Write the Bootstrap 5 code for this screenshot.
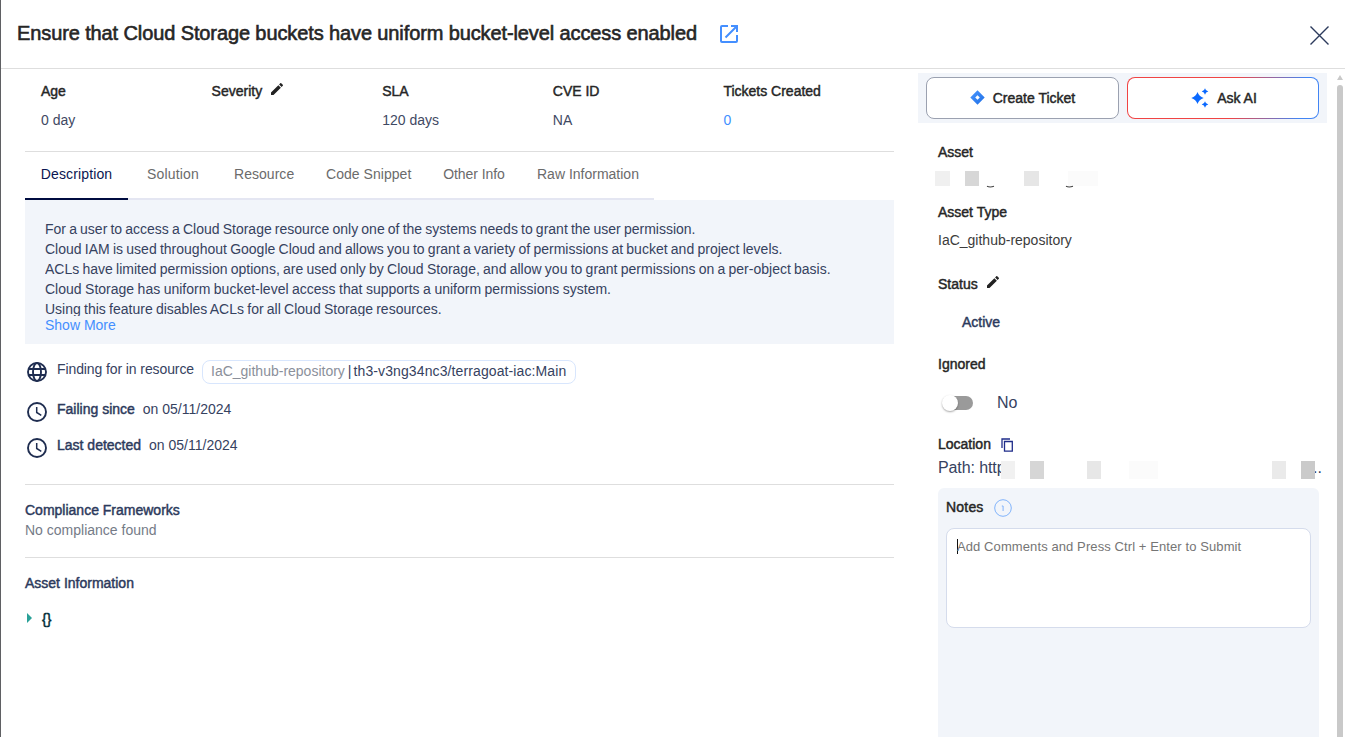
<!DOCTYPE html>
<html lang="en">
<head>
<meta charset="utf-8">
<meta name="viewport" content="width=device-width, initial-scale=1">
<title>Finding details</title>
<link href="https://cdn.jsdelivr.net/npm/bootstrap@5.3.0/dist/css/bootstrap.min.css" rel="stylesheet">
<style>
  body { font-family: "Liberation Sans", Arial, sans-serif; font-size: 14px; line-height: 20px; color: #36425f; height: 737px; overflow: hidden; border-left: 1px solid #5f6063; background: #fff; }
  .strong-text { color: #262626; -webkit-text-stroke: .45px currentColor; }
  .strong-text.navy { color: #2c3a5c; }
  .stat .val.blue, .blue { color: #448fff; }
  .top-bar { height: 69px; border-bottom: 1px solid #dedede; padding: 0 16px 0 16px; }
  .page-title { font-size: 20px; line-height: 26px; margin: 0 23px 2px 0; letter-spacing: -.111px; -webkit-text-stroke: .6px currentColor; font-weight: 400; }
  .close-icon { margin-top: 3px; }
  .main-col { width: 869px; margin-left: 24px; }
  .side-col { width: 409px; margin-left: 24px; padding-top: 4px; }
  .stats { height: 83px; padding: 12px 0 0 16px; border-bottom: 1px solid #dedede; }
  .stat { width: 170.6px; line-height: 20px; }
  .stat .val { margin-top: 9px; color: #3f4963; }
  .pencil { margin: 2px 0 0 9px; }
  .tabs { height: 48px; width: 629px; border-bottom: 2px solid #e4e6f2; flex-wrap: nowrap; }
  .tabs .nav-link { padding: 12px 16px; color: #6b6b6b; height: 48px; line-height: 20px; text-align: center; white-space: nowrap; letter-spacing: .04px; }
  .tabs .nav-link.active { color: #0a1551; border-bottom: 2px solid #000c40; width: 103px; padding-left: 15px; padding-right: 15px; letter-spacing: .13px; }
  .w-sol { width: 90px; letter-spacing: .17px !important; } .w-res { width: 92px; } .w-code { width: 117px; } .w-oth { width: 94px; letter-spacing: -.07px !important; } .w-raw { width: 133px; letter-spacing: 0 !important; }
  .desc-box { background: #f2f5fa; height: 144px; padding: 19px 20px 0; }
  .desc-text { height: 97px; overflow: hidden; white-space: nowrap; word-spacing: -.64px; }
  .desc-text div:nth-child(1) { word-spacing: -.74px; }
  .desc-text div:nth-child(4) { word-spacing: -.4px; }
  .more { line-height: 18px; }
  .fact { height: 36px; padding-left: 2px; }
  .fact svg { margin: 12px 10px 0 0; flex: none; }
  .fact span.lbl { margin-top: 9px; }
  .pill { border: 1px solid #d8e6fd; border-radius: 8px; height: 24px; line-height: 20px; padding: 0 8px; width: 374px; margin: 10px 0 0 8px; white-space: nowrap; }
  .pill .muted { color: #8b909b; }
  .pill .bar { margin: 0 2px 0 3px; }
  .pill .repo { letter-spacing: .11px; }
  .facts { height: 141px; border-bottom: 1px solid #dedede; padding-top: 6px; }
  .comp { height: 73px; padding-top: 15px; border-bottom: 1px solid #dedede; }
  .info { padding-top: 15px; }
  .grey { color: #757b87; }
  .json-mark { margin: 4px 0 0 2px; }
  .strong-text.json { margin-left: 10px; color: #002b36; }
  .act-bar { background: #f2f5fa; height: 50px; padding: 4px 8px; gap: 8px; }
  .act-bar .btn { width: 193px; height: 42px; border-radius: 8px; font-size: 14px; background: #fff; border: 1px solid #9ba1b0; padding: 0 0 1px; line-height: 20px; }
  .act-bar .ask { border: 0; padding: 1px; background: linear-gradient(100deg, #f04444 0, #f04444 55%, #4285f4 90%); width: 192px; }
  .ask-inner { background: #fff; border-radius: 7px; padding: 0 0 1px 2px; }
  .side-body { padding-left: 20px; }
  .side-body .redacted { margin: 8px 0 0 -3px; }
  .toggle-track { width: 29px; height: 14px; border-radius: 7px; background: #9a9a9a; margin: 0 24px 0 6px; }
  .toggle-knob { width: 16px; height: 16px; border-radius: 50%; background: #fff; box-shadow: 0 1px 2px rgba(0,0,0,.35); margin: -1px 0 0 -2px; }
  .toggle-row { margin-top: 19px; font-size: 16px; }
  .path-row { margin-top: 4px; font-size: 16px; height: 24px; width: 386px; line-height: 20px; }
  .path-row .path { width: 63px; letter-spacing: -.1px; }
  .path-row svg { margin-top: 3px; position: relative; }
  .path-row .dots { margin-left: -3px; }
  .notes { background: #f2f5fa; width: 381px; height: 260px; border-radius: 6px 6px 0 0; padding: 9px 8px 0; margin-top: 6px; }
  .comment-box { height: 100px; border: 1px solid #d5dcec; border-radius: 8px; font-size: 13px; line-height: 16px; color: #757575; padding: 10px; letter-spacing: .095px; margin-top: 11px; background: #fff; }
  .caret { width: 1px; height: 15px; background: #111; margin-right: -1px; }
  .scroll-col { width: 6px; margin-left: 10px; padding-top: 6px; }
  .thumb { width: 6px; height: 660px; background: #c9c9c9; border-radius: 3px 3px 0 0; margin-top: 4px; }
</style>
</head>
<body class="d-flex flex-column">
<header class="top-bar d-flex align-items-center flex-shrink-0">
  <h1 class="page-title strong-text text-nowrap">Ensure that Cloud Storage buckets have uniform bucket-level access enabled</h1>
  <svg width="18" height="18" viewBox="0 0 18 18" fill="none" stroke="#448fff" stroke-width="2"><path d="M8 1H2Q1 1 1 2v14q0 1 1 1h14q1 0 1-1v-6M11 1h6v6M17 1 5.500 12.500"/></svg>
  <svg class="ms-auto close-icon" width="19" height="19" viewBox="0 0 19 19" stroke="#2c3a5c" stroke-width="1.400"><path d="m.5.5 18 18M18.500.5l-18 18"/></svg>
</header>
<div class="d-flex flex-fill">
  <main class="main-col flex-shrink-0">
    <section class="stats d-flex">
      <div class="stat flex-shrink-0"><div class="strong-text">Age</div><div class="val">0 day</div></div>
      <div class="stat flex-shrink-0"><div class="strong-text d-flex">Severity
        <svg class="pencil" width="12" height="12" viewBox="3 3 18 18" fill="#222"><path d="M3 17.250V21h3.750L17.800 9.940l-3.750-3.750zM20.700 7a1 1 0 0 0 0-1.400l-2.340-2.340a1 1 0 0 0-1.400 0l-1.830 1.830 3.750 3.750z"/></svg></div></div>
      <div class="stat flex-shrink-0"><div class="strong-text">SLA</div><div class="val">120 days</div></div>
      <div class="stat flex-shrink-0"><div class="strong-text">CVE ID</div><div class="val">NA</div></div>
      <div class="stat flex-shrink-0"><div class="strong-text">Tickets Created</div><div class="val blue">0</div></div>
    </section>
    <nav class="nav tabs">
      <a class="nav-link active">Description</a><a class="nav-link w-sol">Solution</a><a class="nav-link w-res">Resource</a><a class="nav-link w-code">Code Snippet</a><a class="nav-link w-oth">Other Info</a><a class="nav-link w-raw">Raw Information</a>
    </nav>
    <section class="desc-box">
      <div class="desc-text">
        <div>For a user to access a Cloud Storage resource only one of the systems needs to grant the user permission.</div>
        <div>Cloud IAM is used throughout Google Cloud and allows you to grant a variety of permissions at bucket and project levels.</div>
        <div>ACLs have limited permission options, are used only by Cloud Storage, and allow you to grant permissions on a per-object basis.</div>
        <div>Cloud Storage has uniform bucket-level access that supports a uniform permissions system.</div>
        <div>Using this feature disables ACLs for all Cloud Storage resources.</div>
      </div>
      <div class="more blue">Show More</div>
    </section>
    <section class="facts">
      <div class="fact d-flex mb-1">
        <svg width="20" height="20" viewBox="0 0 20 20" fill="none" stroke="#1f2d50" stroke-width="1.900"><circle cx="10" cy="10" r="9"/><ellipse cx="10" cy="10" rx="4" ry="9"/><path d="M1.500 7h17M1.500 13h17"/></svg>
        <span class="lbl text-nowrap" style="letter-spacing:-.1px">Finding for in resource</span>
        <span class="pill"><span class="muted">IaC_github-repository</span><span class="bar">|</span><span class="repo">th3-v3ng34nc3/terragoat-iac:Main</span></span>
      </div>
      <div class="fact d-flex">
        <svg width="20" height="20" viewBox="0 0 20 20" fill="none" stroke="#1f2d50" stroke-width="1.900"><circle cx="10" cy="10" r="9"/><path stroke-width="1.500" d="M9.700 5v5.500l4.600 2.800"/></svg>
        <span class="lbl strong-text navy">Failing since</span><span class="lbl ms-2">on 05/11/2024</span>
      </div>
      <div class="fact d-flex">
        <svg width="20" height="20" viewBox="0 0 20 20" fill="none" stroke="#1f2d50" stroke-width="1.900"><circle cx="10" cy="10" r="9"/><path stroke-width="1.500" d="M9.700 5v5.500l4.600 2.800"/></svg>
        <span class="lbl strong-text navy">Last detected</span><span class="lbl ms-2">on 05/11/2024</span>
      </div>
    </section>
    <section class="comp"><div class="strong-text navy">Compliance Frameworks</div><div class="grey">No compliance found</div></section>
    <section class="info">
      <div class="strong-text navy">Asset Information</div>
      <div class="d-flex mt-3"><svg class="json-mark" width="5" height="10" viewBox="0 0 5 10"><path d="M0 0v10l5-5z" fill="#2aa198"/></svg><span class="strong-text json">{}</span></div>
    </section>
  </main>
  <aside class="side-col flex-shrink-0">
    <div class="act-bar d-flex">
      <button class="btn strong-text d-flex align-items-center justify-content-center"><svg class="me-2" width="15" height="15" viewBox="0 0 15 15"><defs><linearGradient id="dg" x1="0" y1="0" x2="1" y2="1"><stop offset="0" stop-color="#4a97ff"/><stop offset="1" stop-color="#1f6fe5"/></linearGradient></defs><path fill="url(#dg)" fill-rule="evenodd" d="M7.500.3 14.700 7.500 7.500 14.700.3 7.500zM7.500 5.200 5.200 7.500l2.300 2.300 2.300-2.300z"/></svg>Create Ticket</button>
      <button class="btn ask strong-text d-flex"><span class="ask-inner w-100 h-100 d-flex align-items-center justify-content-center"><svg class="me-2" width="18" height="20" viewBox="0 0 18 20" fill="#0b69ff"><path d="M6.500 4Q8 8.500 12.700 10 8 11.500 6.500 16 5 11.500.3 10 5 8.500 6.500 4zM14 .2q.6 2.700 3.300 3.300-2.700.6-3.300 3.300-.6-2.700-3.300-3.300 2.700-.6 3.300-3.300zM14 13.200q.6 2.700 3.300 3.300-2.700.6-3.300 3.300-.6-2.700-3.300-3.300 2.700-.6 3.300-3.300z"/></svg>Ask AI</span></button>
    </div>
    <div class="side-body">
      <div class="strong-text" style="margin-top:19px">Asset</div>
      <svg class="d-block redacted" width="163" height="18" viewBox="0 0 163 18"><path fill="#f0f0f0" d="M0 1h15v15H0z"/><path fill="#d7d7d7" d="M30 1h14v15H30z"/><path fill="#e6e6e6" d="M89 1h15v15H89z"/><path fill="#fbfbfb" d="M133 1h30v15h-30z"/><path d="M52 16.300q3 1.500 7 0M131 16.300q3 1.500 7 0" fill="none" stroke="#444" stroke-width="1.100"/></svg>
      <div class="strong-text" style="margin-top:14px">Asset Type</div>
      <div style="margin-top:8px;color:#3c3c3c">IaC_github-repository</div>
      <div class="strong-text d-flex" style="margin-top:24px">Status<svg class="pencil" width="12" height="12" viewBox="3 3 18 18" fill="#222"><path d="M3 17.250V21h3.750L17.800 9.940l-3.750-3.750zM20.700 7a1 1 0 0 0 0-1.400l-2.340-2.340a1 1 0 0 0-1.400 0l-1.830 1.830 3.750 3.750z"/></svg></div>
      <div class="strong-text navy" style="margin:18px 0 0 24px">Active</div>
      <div class="strong-text" style="margin-top:22px">Ignored</div>
      <div class="d-flex align-items-center toggle-row"><span class="toggle-track"><span class="toggle-knob d-block"></span></span>No</div>
      <div class="strong-text d-flex" style="margin-top:21px">Location<svg style="margin:4px 0 0 10px" width="12" height="14" viewBox="0 0 12 14" fill="none" stroke="#1f2d8a" stroke-width="1.300"><path d="M1 10V1h8M3.500 3.500h7.800v9.600H3.500z"/></svg></div>
      <div class="d-flex path-row"><span class="path text-nowrap flex-shrink-0">Path: http</span><svg class="flex-shrink-0" width="315" height="18" viewBox="0 0 315 18"><path fill="#fff" d="M0 0h314v18H0z"/><path fill="#f1f1f1" d="M0 0h14v18H0z"/><path fill="#d6d6d6" d="M29 0h14v18H29z"/><path fill="#e7e7e7" d="M86 0h14v18H86z"/><path fill="#fbfbfb" d="M128 0h29v18h-29z"/><path fill="#eaeaea" d="M271 0h14v18h-14z"/><path fill="#cacaca" d="M300 0h14v18h-14z"/></svg><span class="dots">..</span></div>
      <div class="notes">
        <div class="d-flex align-items-center"><span class="strong-text" style="letter-spacing:.2px">Notes</span><svg style="margin:1px 0 -1px 10px" width="18" height="18" viewBox="0 0 18 18" fill="none" stroke="#80b3fb"><circle cx="9" cy="9" r="8.300"/><path d="M7.800 7h1.300v5"/></svg></div>
        <div class="comment-box d-flex"><span class="caret"></span><span>Add Comments and Press Ctrl + Enter to Submit</span></div>
      </div>
    </div>
  </aside>
  <div class="scroll-col flex-shrink-0"><svg class="d-block" width="6" height="6" viewBox="0 0 6 6"><path d="M3 0l3 5H0z" fill="#c9c9c9"/></svg><div class="thumb"></div></div>
</div>
<script src="https://cdn.jsdelivr.net/npm/bootstrap@5.3.0/dist/js/bootstrap.bundle.min.js"></script>
</body>
</html>
